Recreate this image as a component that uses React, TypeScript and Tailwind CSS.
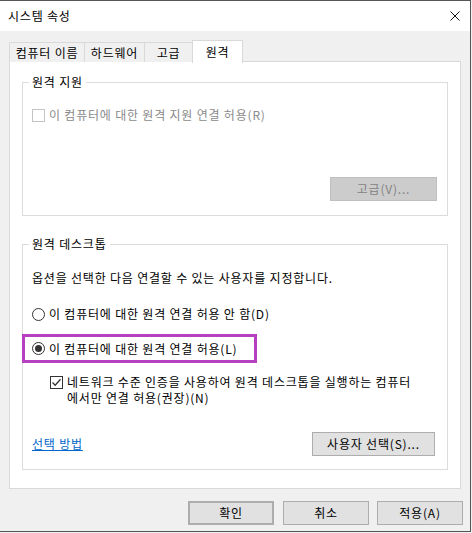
import React from 'react'

const FONT = { fontFamily: '"Noto Sans CJK KR", "Noto Sans", sans-serif' }

function Radio({ checked }: { checked?: boolean }) {
  return (
    <span className="w-[13px] h-[13px] rounded-full border border-[#333] bg-white flex items-center justify-center shrink-0">
      {checked && <span className="w-[7px] h-[7px] rounded-full bg-[#333]" />}
    </span>
  )
}

function Check({ checked, disabled }: { checked?: boolean; disabled?: boolean }) {
  return (
    <span
      className={
        'w-[13px] h-[13px] border bg-white flex items-center justify-center shrink-0 ' +
        (disabled ? 'border-[#c4c4c4]' : 'border-[#333]')
      }
    >
      {checked && (
        <svg width="11" height="11" viewBox="0 0 11 11">
          <path d="M1.5 5.5 L4.2 8.2 L9.5 2.2" fill="none" stroke="#333" strokeWidth="1.3" />
        </svg>
      )}
    </span>
  )
}

function Btn({ children, className = '' }: { children: React.ReactNode; className?: string }) {
  return (
    <div
      className={
        'h-[24px] flex items-center justify-center text-[12px] leading-none border bg-[#e1e1e1] border-[#adadad] text-black ' +
        className
      }
    >
      {children}
    </div>
  )
}

export default function App() {
  return (
    <div className="w-[472px] h-[533px] bg-[#f0f0f0] text-black tracking-[0.8px]" style={FONT}>
      <div className="w-[471px] h-[532px] flex flex-col border-t border-r border-b border-[#555] bg-[#f0f0f0]">
        {/* title bar */}
        <div className="h-[30px] bg-white flex items-center justify-between pl-[8px] pr-[10px]">
          <span className="text-[12px] leading-none">시스템 속성</span>
          <svg width="10" height="10" viewBox="0 0 10 10">
            <path d="M0.5 0.5 L9.5 9.5 M9.5 0.5 L0.5 9.5" stroke="#111" strokeWidth="1" />
          </svg>
        </div>

        {/* tabs */}
        <div className="flex items-end h-[23px] mt-[8px] pl-[9px] text-[12px] leading-none relative z-10">
          <div className="w-[75px] h-[20px] flex items-center justify-center border-t border-l border-[#d9d9d9] bg-[#f0f0f0]">컴퓨터 이름</div>
          <div className="w-[60px] h-[20px] flex items-center justify-center border-t border-l border-[#d9d9d9] bg-[#f0f0f0]">하드웨어</div>
          <div className="w-[48px] h-[20px] flex items-center justify-center border-t border-l border-[#d9d9d9] bg-[#f0f0f0]">고급</div>
          <div className="w-[51px] h-[23px] flex items-start justify-center pt-[5px] border-t border-l border-r border-[#d9d9d9] bg-white -mb-px">원격</div>
        </div>

        {/* tab panel */}
        <div className="ml-[9px] w-[452px] h-[428px] -mt-px border border-[#d9d9d9] bg-white px-[12px] text-[12px]">
          <fieldset className="mt-[12px] h-[142px] border border-[#dcdcdc] px-[9px] flex flex-col">
            <legend className="-ml-[3px] px-[3px] h-[16px] leading-[16px]">원격 지원</legend>
            <div className="mt-[17px] h-[16px] flex items-center gap-[4px] text-[#8a8a8a] leading-none">
              <Check disabled />
              <span>이 컴퓨터에 대한 원격 지원 연결 허용(R)</span>
            </div>
            <div className="mt-[54px] flex justify-end pr-[1px]">
              <div className="w-[107px] h-[24px] flex items-center justify-center border border-[#bfbfbf] bg-[#cccccc] text-[#838383] leading-none">
                고급(V)...
              </div>
            </div>
          </fieldset>

          <fieldset className="mt-[20px] h-[234px] border border-[#dcdcdc] px-[9px] flex flex-col">
            <legend className="-ml-[3px] px-[3px] h-[16px] leading-[16px]">원격 데스크톱</legend>
            <div className="mt-[18px] h-[16px] leading-[16px] whitespace-nowrap">옵션을 선택한 다음 연결할 수 있는 사용자를 지정합니다.</div>
            <div className="mt-[20px] h-[16px] flex items-center gap-[4px] leading-none">
              <Radio />
              <span>이 컴퓨터에 대한 원격 연결 허용 안 함(D)</span>
            </div>
            <div className="mt-[12px] -ml-[10px] w-[235px] h-[29px] border-[3px] border-[#b740c0] pl-[7px] flex items-center gap-[4px] leading-none">
              <Radio checked />
              <span>이 컴퓨터에 대한 원격 연결 허용(L)</span>
            </div>
            <div className="mt-[11px] ml-[18px] flex items-start gap-[4px]">
              <div className="mt-[2px]">
                <Check checked />
              </div>
              <div className="leading-[16px] whitespace-nowrap">
                네트워크 수준 인증을 사용하여 원격 데스크톱을 실행하는 컴퓨터
                <br />
                에서만 연결 허용(권장)(N)
              </div>
            </div>
            <div className="mt-[26px] flex items-center justify-between pr-[3px]">
              <span className="text-[#0066cc] underline leading-none">선택 방법</span>
              <Btn className="w-[123px]">사용자 선택(S)...</Btn>
            </div>
          </fieldset>
        </div>

        {/* footer buttons */}
        <div className="mt-[12px] flex pl-[188px]">
          <Btn className="w-[86px] border-2 border-[#0078d7]">확인</Btn>
          <Btn className="w-[86px] ml-[9px]">취소</Btn>
          <Btn className="w-[86px] ml-[8px]">적용(A)</Btn>
        </div>
      </div>
    </div>
  )
}
